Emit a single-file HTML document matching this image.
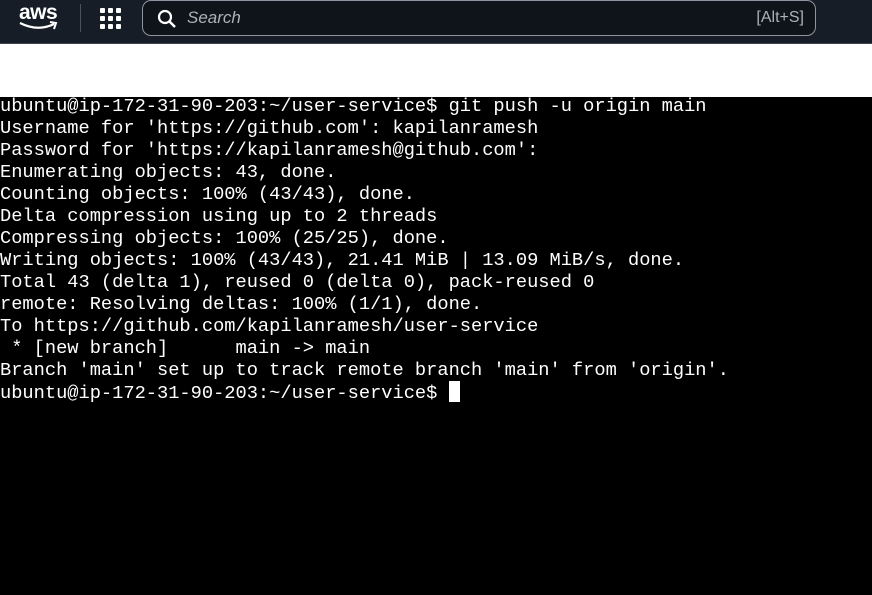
<!DOCTYPE html>
<html><head><style>
body{margin:0;width:872px;height:595px;overflow:hidden;background:#000;font-family:"Liberation Sans",sans-serif}
.top{position:absolute;left:0;top:0;width:872px;height:43px;background:#161d26;border-bottom:1px solid #3b4450}
.white{position:absolute;left:0;top:44px;width:872px;height:53px;background:#fff}
.term{position:absolute;left:0;top:97px;width:872px;height:498px;background:#000;color:#fff;font-family:"Liberation Mono",monospace;font-size:18.7px;line-height:22px;white-space:pre}
.inner{position:relative;top:-2px}
.search{position:absolute;left:142px;top:0px;width:674px;height:36px;border:1.5px solid #8d96a0;border-radius:9px;box-sizing:border-box;background:#0f141a}
.cur{display:inline-block;width:11px;height:21px;background:#fff;vertical-align:-4px}
</style></head><body>
<div class="top">
<div style="position:absolute;left:19px;top:1px;color:#fff;font-size:21px;font-weight:bold;letter-spacing:-0.5px">aws</div>
<svg style="position:absolute;left:18px;top:20px" width="42" height="12"><path d="M2 3 Q20 12 36 4" stroke="#fff" stroke-width="2.2" fill="none"/><path d="M32 2 L38 3 L36 9" stroke="#fff" stroke-width="2" fill="none"/></svg>
<div style="position:absolute;left:80px;top:4px;width:1px;height:28px;background:#4a525c"></div>
<svg style="position:absolute;left:100px;top:8px" width="21" height="21" fill="#fff"><rect x="0" y="0" width="5" height="5" rx="1"/><rect x="8" y="0" width="5" height="5" rx="1"/><rect x="16" y="0" width="5" height="5" rx="1"/><rect x="0" y="8" width="5" height="5" rx="1"/><rect x="8" y="8" width="5" height="5" rx="1"/><rect x="16" y="8" width="5" height="5" rx="1"/><rect x="0" y="16" width="5" height="5" rx="1"/><rect x="8" y="16" width="5" height="5" rx="1"/><rect x="16" y="16" width="5" height="5" rx="1"/></svg>
<div class="search">
<svg style="position:absolute;left:14px;top:8px" width="20" height="20"><circle cx="8" cy="8" r="6" stroke="#fff" stroke-width="2.2" fill="none"/><path d="M12.5 12.5 L18 18" stroke="#fff" stroke-width="2.5"/></svg>
<span style="position:absolute;left:44px;top:7px;color:#aab2bb;font-style:italic;font-size:17px">Search</span>
<span style="position:absolute;right:11px;top:8px;color:#aab2bb;font-size:16px">[Alt+S]</span>
</div>
</div>
<div class="white"></div>
<div class="term"><div class="inner">ubuntu@ip-172-31-90-203:~/user-service$ git push -u origin main
Username for 'https://github.com': kapilanramesh
Password for 'https://kapilanramesh@github.com':
Enumerating objects: 43, done.
Counting objects: 100% (43/43), done.
Delta compression using up to 2 threads
Compressing objects: 100% (25/25), done.
Writing objects: 100% (43/43), 21.41 MiB | 13.09 MiB/s, done.
Total 43 (delta 1), reused 0 (delta 0), pack-reused 0
remote: Resolving deltas: 100% (1/1), done.
To https://github.com/kapilanramesh/user-service
 * [new branch]      main -> main
Branch 'main' set up to track remote branch 'main' from 'origin'.
ubuntu@ip-172-31-90-203:~/user-service$ <span class="cur"></span></div></div>
</body></html>
